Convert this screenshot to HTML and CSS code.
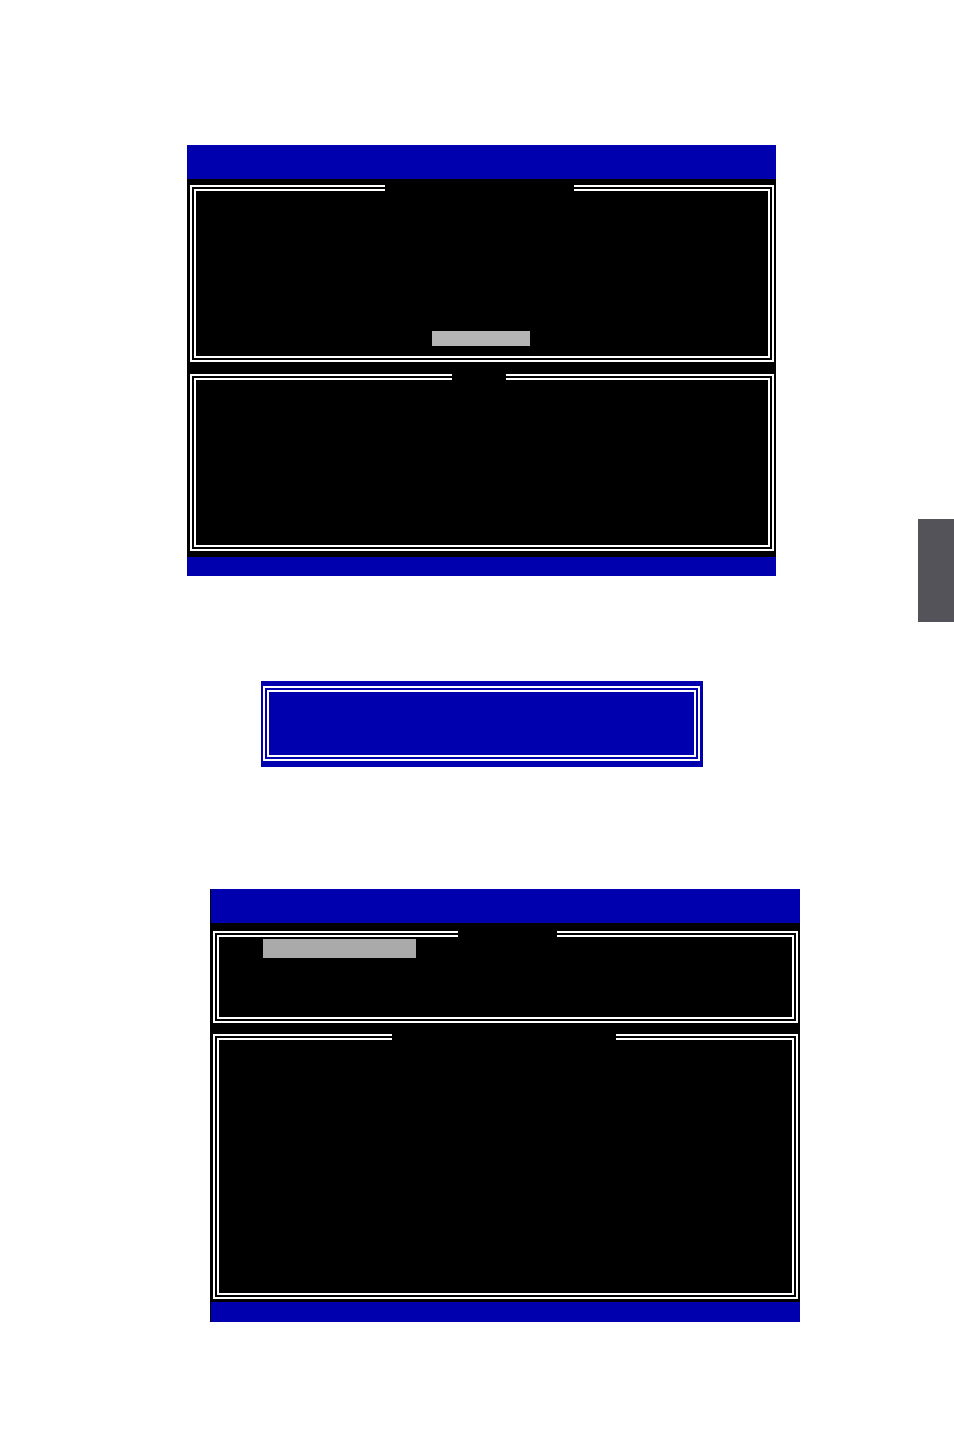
FILE: index.html
```html
<!DOCTYPE html>
<html lang="en">
<head>
  <meta charset="UTF-8" />
  <title>RAID Setup Screens</title>
  <link rel="stylesheet" href="styles.css">
</head>
<body>
  <div class="page">

    <!-- main menu screen -->
    <section class="screen screen-main">
      <div class="screen-bar top"></div>
      <div class="screen-body">
        <div class="panel panel-menu">
          <span class="panel-title"></span>
          <div class="menu-item selected"></div>
        </div>
        <div class="panel panel-info">
          <span class="panel-title"></span>
        </div>
      </div>
      <div class="screen-bar bottom"></div>
    </section>

    <!-- confirmation box -->
    <section class="dialog">
      <div class="dialog-frame"></div>
    </section>

    <!-- array list screen -->
    <section class="screen screen-list">
      <div class="screen-bar top"></div>
      <div class="screen-body">
        <div class="panel panel-arrays">
          <span class="panel-title"></span>
          <div class="array-row selected"></div>
        </div>
        <div class="panel panel-disks">
          <span class="panel-title"></span>
        </div>
      </div>
      <div class="screen-bar bottom"></div>
    </section>

  </div>

  <div class="chapter-tab"></div>
</body>
</html>
```

FILE: styles.css
```css
html, body {
  margin: 0;
  padding: 0;
  background: white;
  font-family: "Liberation Mono", monospace;
  color: white;
}

.page {
  position: relative;
  padding-top: 145px;
  height: 1307px;
}

/* Blue/black BIOS style screens */
.screen {
  box-sizing: border-box;
  display: flex;
  flex-direction: column;
  background: black;
}
.screen-bar {
  background: #0000ae;
}
.screen-body {
  display: flex;
  flex-direction: column;
  gap: 12px;
}

.screen-main {
  margin-left: 187px;
  width: 589px;
}
.screen-main .screen-bar.top { height: 34px; }
.screen-main .screen-bar.bottom { height: 19px; }
.screen-main .screen-body { padding: 6px 2px 6px 3px; }

.screen-list {
  margin-top: 122px;
  margin-left: 210px;
  width: 590px;
  border-left: 1px solid #000;
}
.screen-list .screen-bar.top { height: 34px; }
.screen-list .screen-bar.bottom { height: 20px; }
.screen-list .screen-body { padding: 8px 2px 3px 2px; gap: 11px; }

/* double line frames */
.panel {
  position: relative;
  box-sizing: border-box;
  border: 6px double white;
  display: flex;
  flex-direction: column;
}
.panel-title {
  position: absolute;
  top: -6px;
  height: 6px;
  background: black;
}

.panel-menu {
  height: 177px;
  align-items: center;
  justify-content: flex-end;
  padding-bottom: 10px;
}
.panel-menu .panel-title { left: 189px; width: 189px; }
.panel-info { height: 177px; }
.panel-info .panel-title { left: 256px; width: 54px; }

.menu-item {
  width: 98px;
  height: 15px;
  margin-right: 2px;
}
.menu-item.selected { background: #b4b4b4; }

.panel-arrays {
  height: 92px;
  padding: 2px 0 0 44px;
}
.panel-arrays .panel-title { left: 239px; width: 99px; }
.panel-disks { height: 265px; }
.panel-disks .panel-title { left: 173px; width: 224px; }

.array-row {
  width: 153px;
  height: 19px;
}
.array-row.selected { background: #aaaaaa; }

/* popup dialog */
.dialog {
  box-sizing: border-box;
  margin-top: 105px;
  margin-left: 261px;
  width: 442px;
  height: 86px;
  background: #0000ae;
  padding: 5px 2px 6px 2px;
}
.dialog-frame {
  box-sizing: border-box;
  width: 437px;
  height: 75px;
  border: 6px double white;
}

/* grey thumb tab on the page edge */
.chapter-tab {
  position: absolute;
  top: 519px;
  right: 0;
  width: 36px;
  height: 103px;
  background: #55535a;
}
```
